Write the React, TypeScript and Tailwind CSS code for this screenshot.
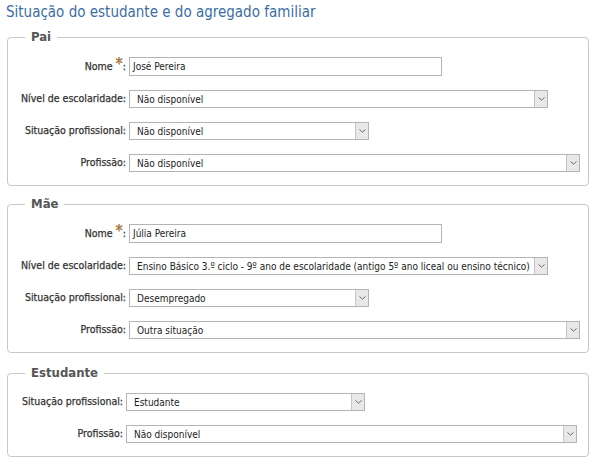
import React from "react";

const FONT = "font-['DejaVu_Sans_Condensed','Liberation_Sans',sans-serif]";

function Chevron() {
  return (
    <svg width="7" height="4" viewBox="0 0 7 4" fill="none">
      <path d="M0.5 0.5 L3.5 3.2 L6.5 0.5" stroke="#6b6b6b" strokeWidth="1" />
    </svg>
  );
}

function Select({ value, width }: { value: string; width: string }) {
  return (
    <div className={`flex h-[18px] ${width} border border-[#b4b4b4] bg-white`}>
      <div className="flex-1 min-w-0 pl-[7px] flex items-center text-[10px] text-[#222] whitespace-nowrap overflow-hidden">
        {value}
      </div>
      <div className="w-[13px] flex items-center justify-center bg-[#e8e8e8] border-l border-[#c4c4c4]">
        <Chevron />
      </div>
    </div>
  );
}

function TextInput({ value }: { value: string }) {
  return (
    <div className="flex h-[19px] w-[313px] border border-[#b4b4b4] bg-white items-center pl-[3px] text-[10px] text-[#222]">
      {value}
    </div>
  );
}

function Label({ children, req }: { children: React.ReactNode; req?: boolean }) {
  return (
    <div className="text-right text-[10.5px] font-normal text-[#333] whitespace-nowrap [-webkit-text-stroke:0.25px_#333]">
      {req ? (
        <>
          Nome <span className="text-[#f7941d] text-[16px] leading-[0] relative top-[-1px]">*</span>:
        </>
      ) : (
        children
      )}
    </div>
  );
}

function Row({
  label,
  req,
  children,
  labelW,
}: {
  label: string;
  req?: boolean;
  children: React.ReactNode;
  labelW: string;
}) {
  return (
    <div className="flex items-center gap-[3px]">
      <div className={labelW}>
        <Label req={req}>{label}</Label>
      </div>
      {children}
    </div>
  );
}

function Group({
  title,
  children,
  className,
}: {
  title: string;
  children: React.ReactNode;
  className?: string;
}) {
  return (
    <fieldset
      className={`ml-[7px] w-[582px] border border-[#c8c8c8] rounded-[4px] pl-0 pr-0 pb-[13px] ${className ?? ""}`}
    >
      <legend className="ml-[17px] px-[6px] text-[13px] leading-[16px] font-bold text-[#555]">
        {title}
      </legend>
      <div className="mt-[12px] flex flex-col gap-[14px]">{children}</div>
    </fieldset>
  );
}

export default function App() {
  return (
    <div className={`w-[600px] h-[467px] bg-white ${FONT}`}>
      <h1 className="pl-[6px] pt-[2px] text-[15px] leading-[20px] text-[#3a6ea5] font-normal">
        Situação do estudante e do agregado familiar
      </h1>
      <Group title="Pai" className="mt-[7px]">
        <Row label="Nome" req labelW="w-[118px]">
          <TextInput value="José Pereira" />
        </Row>
        <Row label="Nível de escolaridade:" labelW="w-[118px]">
          <Select value="Não disponível" width="w-[419px]" />
        </Row>
        <Row label="Situação profissional:" labelW="w-[118px]">
          <Select value="Não disponível" width="w-[240px]" />
        </Row>
        <Row label="Profissão:" labelW="w-[118px]">
          <Select value="Não disponível" width="w-[451px]" />
        </Row>
      </Group>
      <Group title="Mãe" className="mt-[10px]">
        <Row label="Nome" req labelW="w-[118px]">
          <TextInput value="Júlia Pereira" />
        </Row>
        <Row label="Nível de escolaridade:" labelW="w-[118px]">
          <Select
            value="Ensino Básico 3.º ciclo - 9º ano de escolaridade (antigo 5º ano liceal ou ensino técnico)"
            width="w-[419px]"
          />
        </Row>
        <Row label="Situação profissional:" labelW="w-[118px]">
          <Select value="Desempregado" width="w-[240px]" />
        </Row>
        <Row label="Profissão:" labelW="w-[118px]">
          <Select value="Outra situação" width="w-[451px]" />
        </Row>
      </Group>
      <Group title="Estudante" className="mt-[12px]">
        <Row label="Situação profissional:" labelW="w-[115px]">
          <Select value="Estudante" width="w-[239px]" />
        </Row>
        <Row label="Profissão:" labelW="w-[115px]">
          <Select value="Não disponível" width="w-[451px]" />
        </Row>
      </Group>
    </div>
  );
}
